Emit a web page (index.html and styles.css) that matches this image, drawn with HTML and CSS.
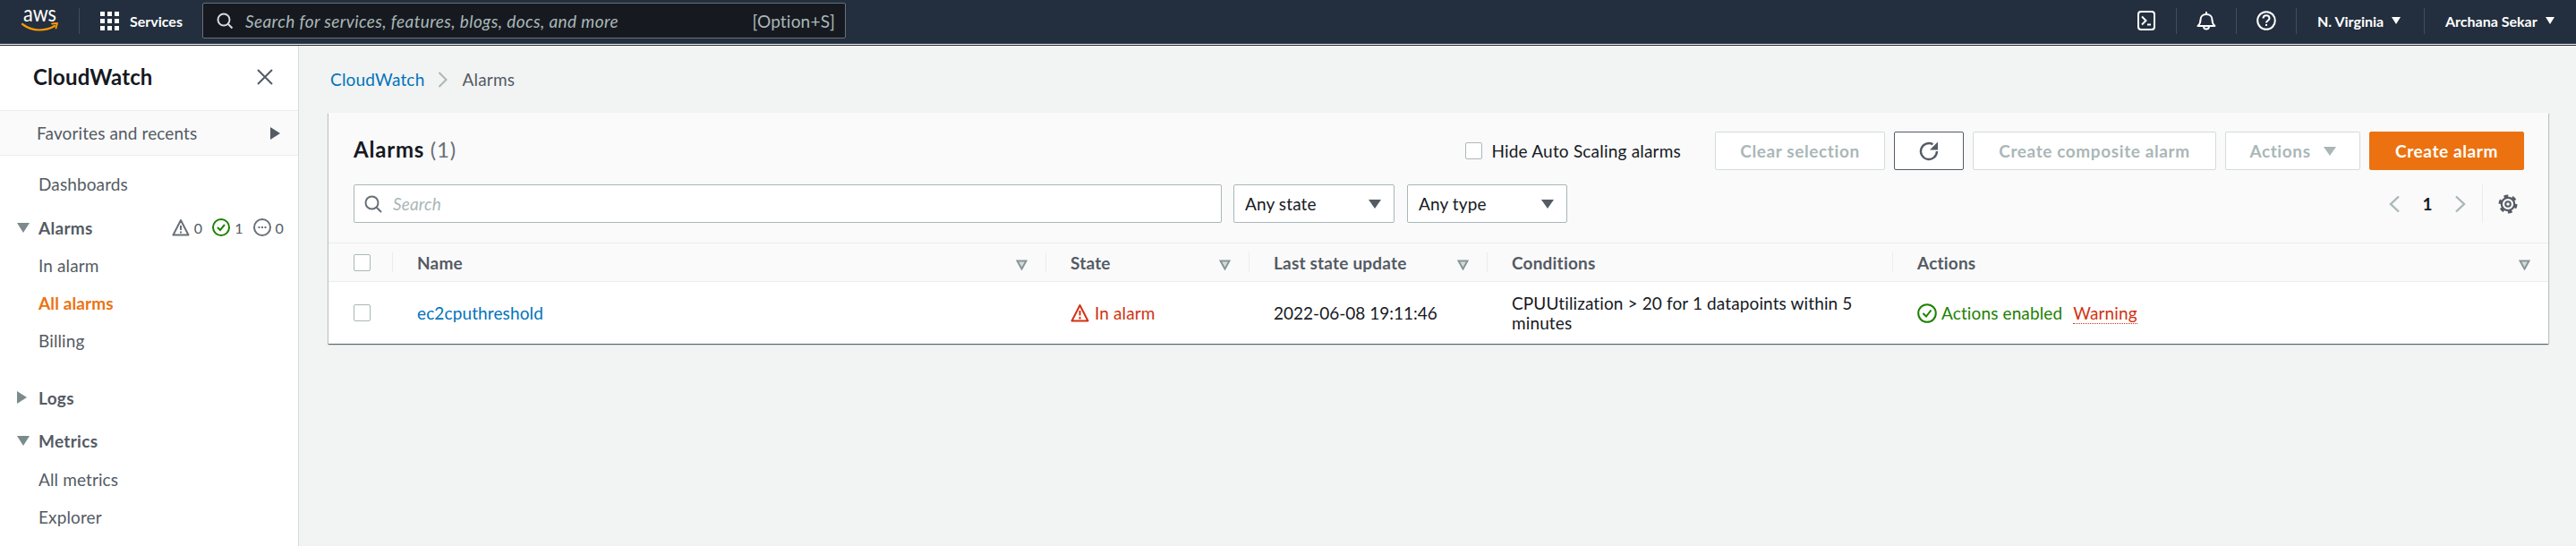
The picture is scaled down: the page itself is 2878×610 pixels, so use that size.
FILE: index.html
```html
<!DOCTYPE html>
<html>
<head>
<title>Alarms | CloudWatch</title>
<link rel="stylesheet" href="styles.css">
</head>
<body>

<header class="topbar">
  <a class="logo">
    <svg class="logo-svg" width="42" height="26" viewBox="0 0 42 26">
      <text x="2" y="14" class="logo-text" textLength="37" lengthAdjust="spacingAndGlyphs">aws</text>
      <path d="M1 17c6 4.500 13 6.500 19 6.500 6 0 12-1.500 17-4.500" fill="none" stroke="#ff9900" stroke-width="2.200" stroke-linecap="round"/>
      <path d="M34 16.500l6-.5-1.500 5.500" fill="none" stroke="#ff9900" stroke-width="1.800" stroke-linecap="round" stroke-linejoin="round"/>
    </svg>
  </a>
  <span class="bar-sep"></span>
  <a class="services">
    <svg width="21" height="21" viewBox="0 0 21 21" fill="#fff">
      <rect width="5" height="5"/><rect x="8" width="5" height="5"/><rect x="16" width="5" height="5"/>
      <rect y="8" width="5" height="5"/><rect x="8" y="8" width="5" height="5"/><rect x="16" y="8" width="5" height="5"/>
      <rect y="16" width="5" height="5"/><rect x="8" y="16" width="5" height="5"/><rect x="16" y="16" width="5" height="5"/>
    </svg>
    <span>Services</span>
  </a>
  <div class="top-search">
    <svg width="19" height="19" viewBox="0 0 19 19" fill="none" stroke="#d5dbdb" stroke-width="2"><circle cx="8" cy="8" r="6.500"/><path d="M12.500 12.500l5 5"/></svg>
    <span class="top-search-text">Search for services, features, blogs, docs, and more</span>
    <span class="top-search-key">[Option+S]</span>
  </div>
  <div class="top-right">
    <a class="top-icon">
      <svg width="20" height="22" viewBox="0 0 20 22" fill="none" stroke="#fff" stroke-width="2"><rect x="1" y="1" width="18" height="20" rx="3"/><path d="M5 6.500l4.500 4.500L5 15.500M11 15.500h4"/></svg>
    </a>
    <span class="bar-sep"></span>
    <a class="top-icon">
      <svg width="22" height="22" viewBox="0 0 22 22" fill="none" stroke="#fff" stroke-width="2"><path d="M1.500 17c2.500-2 3-3.500 3-7 0-3.500 2.500-6 6.500-6s6.500 2.500 6.500 6c0 3.500.5 5 3 7z" stroke-linejoin="round"/><path d="M11 1v3M8 17.500c0 4 6 4 6 0"/></svg>
    </a>
    <span class="bar-sep"></span>
    <a class="top-icon">
      <svg width="22" height="22" viewBox="0 0 22 22" fill="none" stroke="#fff" stroke-width="2"><circle cx="11" cy="11" r="9.800"/><path d="M7.500 8.500c0-4.500 7-4.500 7 0 0 2.500-3.500 2.500-3.500 5"/><path d="M11 15v2"/></svg>
    </a>
    <span class="bar-sep"></span>
    <a class="top-menu region">N. Virginia<i class="caret-white"></i></a>
    <span class="bar-sep"></span>
    <a class="top-menu user">Archana Sekar<i class="caret-white"></i></a>
  </div>
</header>

<div class="layout">

  <nav class="sidebar">
    <div class="side-head">
      <h2>CloudWatch</h2>
      <svg width="18" height="18" viewBox="0 0 18 18" fill="none" stroke="#545b64" stroke-width="2"><path d="M1 1l16 16M17 1L1 17"/></svg>
    </div>
    <div class="favs"><span>Favorites and recents</span><i class="tri-right dark"></i></div>
    <a class="side-link first">Dashboards</a>
    <div class="side-group alarms">
      <i class="tri-down"></i><b>Alarms</b>
      <span class="counts">
        <svg width="20" height="20" viewBox="0 0 20 20" fill="none" stroke="#687078" stroke-width="2"><path d="M10 2L1.500 18.500h17z" stroke-linejoin="round"/><path d="M10 8v5M10 14.500v2"/></svg><em>0</em>
        <svg class="cnt-ok" width="20" height="20" viewBox="0 0 20 20" fill="none" stroke="#1d8102" stroke-width="2"><circle cx="10" cy="10" r="9"/><path d="M6 10l3 3 5-6"/></svg><em>1</em>
        <svg class="cnt-ins" width="20" height="20" viewBox="0 0 20 20" fill="none" stroke="#687078" stroke-width="2"><circle cx="10" cy="10" r="9"/><path d="M5.500 10h2M9 10h2M12.500 10h2"/></svg><em>0</em>
      </span>
    </div>
    <a class="side-link">In alarm</a>
    <a class="side-link active">All alarms</a>
    <a class="side-link">Billing</a>
    <div class="side-group logs"><i class="tri-right"></i><b>Logs</b></div>
    <div class="side-group metrics"><i class="tri-down"></i><b>Metrics</b></div>
    <a class="side-link">All metrics</a>
    <a class="side-link">Explorer</a>
  </nav>

  <main class="content">
    <div class="crumbs">
      <a>CloudWatch</a>
      <svg width="12" height="20" viewBox="0 0 12 20" fill="none" stroke="#aab7b8" stroke-width="2"><path d="M1.500 2l8 8-8 8"/></svg>
      <span>Alarms</span>
    </div>

    <section class="card">
      <div class="card-head">
        <div class="head-row">
          <h1>Alarms <span>(1)</span></h1>
          <label class="hide-as"><i class="check"></i>Hide Auto Scaling alarms</label>
          <button class="btn off clear">Clear selection</button>
          <button class="btn refresh">
            <svg width="24" height="24" viewBox="0 0 24 24" fill="none" stroke="#545b64" stroke-width="2.400"><path d="M16.500 4.200A9 9 0 1 0 21 12"/><path d="M22 1.500v9h-9z" fill="#545b64" stroke="none"/></svg>
          </button>
          <button class="btn off composite">Create composite alarm</button>
          <button class="btn off actions">Actions<i class="caret-grey"></i></button>
          <button class="btn primary">Create alarm</button>
        </div>
        <div class="filter-row">
          <div class="search">
            <svg width="20" height="20" viewBox="0 0 20 20" fill="none" stroke="#687078" stroke-width="2"><circle cx="8.500" cy="8.500" r="7"/><path d="M13.500 13.500l5.500 5.500"/></svg>
            <span>Search</span>
          </div>
          <div class="select state-sel">Any state<i class="caret-dark"></i></div>
          <div class="select type-sel">Any type<i class="caret-dark"></i></div>
          <div class="pager">
            <svg width="12" height="20" viewBox="0 0 12 20" fill="none" stroke="#aab7b8" stroke-width="2.400"><path d="M11 1.500L2 10l9 8.500"/></svg>
            <b>1</b>
            <svg width="12" height="20" viewBox="0 0 12 20" fill="none" stroke="#aab7b8" stroke-width="2.400"><path d="M1 1.500L10 10l-9 8.500"/></svg>
            <span class="pager-sep"></span>
            <svg class="gear" width="22" height="22" viewBox="0 0 22 22" fill="none" stroke="#545b64"><circle cx="11" cy="11" r="7.200" stroke-width="2.200"/><circle cx="11" cy="11" r="9" stroke-width="3" stroke-dasharray="4.700 4.720"/><circle cx="11" cy="11" r="2.800" stroke-width="2"/></svg>
          </div>
        </div>
      </div>

      <div class="grid-row grid-head">
        <div class="cell c-check"><i class="check"></i></div>
        <div class="cell c-name"><b>Name</b><svg class="sort" width="13" height="12" viewBox="0 0 13 12"><path d="M1.500 1.500h10L6.500 10.500z"/></svg></div>
        <div class="cell c-state"><b>State</b><svg class="sort" width="13" height="12" viewBox="0 0 13 12"><path d="M1.500 1.500h10L6.500 10.500z"/></svg></div>
        <div class="cell c-time"><b>Last state update</b><svg class="sort" width="13" height="12" viewBox="0 0 13 12"><path d="M1.500 1.500h10L6.500 10.500z"/></svg></div>
        <div class="cell c-cond"><b>Conditions</b></div>
        <div class="cell c-act"><b>Actions</b><svg class="sort" width="13" height="12" viewBox="0 0 13 12"><path d="M1.500 1.500h10L6.500 10.500z"/></svg></div>
      </div>
      <div class="grid-row grid-body">
        <div class="cell c-check"><i class="check"></i></div>
        <div class="cell c-name"><a>ec2cputhreshold</a></div>
        <div class="cell c-state red">
          <svg width="21" height="21" viewBox="0 0 21 21" fill="none" stroke="#d13212" stroke-width="2"><path d="M10.500 2L1.500 19.500h18z" stroke-linejoin="round"/><path d="M10.500 8v5.500M10.500 15v2.500"/></svg>
          <span>In alarm</span>
        </div>
        <div class="cell c-time"><span class="stamp">2022-06-08 19:11:46</span></div>
        <div class="cell c-cond"><span class="cond-text">CPUUtilization &gt; 20 for 1 datapoints within 5 minutes</span></div>
        <div class="cell c-act">
          <svg width="22" height="22" viewBox="0 0 22 22" fill="none" stroke="#1d8102" stroke-width="2"><circle cx="11" cy="11" r="9.800"/><path d="M6.500 11l3.500 3.500 5.500-7"/></svg>
          <span class="green">Actions enabled</span>
          <span class="warn">Warning</span>
        </div>
      </div>
    </section>
  </main>
</div>

</body>
</html>
```

FILE: styles.css
```css
* {box-sizing: border-box;}
html, body {margin: 0; padding: 0;}
body {width: 2878px; height: 610px; overflow: hidden; background: #f2f3f3; color: #16191f; font-family: "Lato", "Liberation Sans", sans-serif; font-size: 19px; letter-spacing: .12px;}
i, em {font-style: normal; display: inline-block;}
a {text-decoration: none;}

/* top bar */
.topbar {height: 51px; background: #232f3e; border-bottom: 1px solid #16191f; box-shadow: inset 0 -1px 0 #fff; padding: 0 0 4px 24px; display: flex; align-items: center; color: #fff; letter-spacing: 0;}
.logo {width: 42px; height: 26px; margin-right: 22px;}
.logo-svg {overflow: visible;}
.logo-text {font: 400 25px "Lato", sans-serif; fill: #fff;}
.bar-sep {width: 1px; height: 29px; background: #414d5c;}
.services {display: flex; align-items: center; gap: 12px; margin-left: 23px; font-size: 16px; font-weight: 700; width: 114px;}
.top-search {width: 719px; height: 40px; background: #161a20; border: 1px solid #687078; border-radius: 2px; padding: 0 11px 0 15px; display: flex; align-items: center; color: #aab7b8; font-size: 19px;}
.top-search-text {font-style: italic; margin-left: 13px; flex: 1; letter-spacing: .4px;}
.top-search-key {letter-spacing: .2px;}
.top-right {margin-left: auto; display: flex; align-items: center;}
.top-icon {width: 66px; display: flex; justify-content: center;}
.top-menu {font-size: 16px; font-weight: 700; display: flex; align-items: center; white-space: nowrap;}
.region {width: 142px; padding-left: 23px;}
.user {width: 169px; padding-left: 23px;}
.caret-white {width: 0; height: 0; border: 5.500px solid transparent; border-top: 8px solid #fff; border-bottom: 0; margin-left: 9px;}

.layout {display: flex; height: 559px;}

/* left nav */
.sidebar {width: 334px; background: #fff; border-right: 1px solid #d5dbdb; flex: none; color: #545b64;}
.side-head {height: 72px; padding: 0 28px 3px 37px; display: flex; align-items: center; justify-content: space-between;}
.side-head h2 {margin: 0; font-size: 24px; font-weight: 700; color: #16191f;}
.favs {height: 51px; background: #fafafa; border-top: 1px solid #eaeded; border-bottom: 1px solid #eaeded; padding: 0 20px 0 41px; display: flex; align-items: center; justify-content: space-between;}
.side-link {display: block; height: 42px; line-height: 42px; padding-left: 43px; color: #545b64;}
.side-link.first {margin-top: 11px; margin-bottom: 6px;}
.side-link.active {color: #ec7211; font-weight: 700;}
.side-group {display: flex; align-items: center; height: 42px; padding-left: 19px; color: #545b64;}
.side-group b {margin-left: 10px; letter-spacing: .3px;}
.side-group.alarms {margin-bottom: 1px;}
.side-group.logs {margin-top: 21px; margin-bottom: 6px;}
.side-group.metrics {margin-bottom: 2px;}
.tri-down {width: 0; height: 0; border: 7px solid transparent; border-top: 11px solid #7b8b8c; border-bottom: 0;}
.tri-right {width: 0; height: 0; border: 7px solid transparent; border-left: 11px solid #7b8b8c; border-right: 0; margin-right: 3px;}
.tri-right.dark {border-left-color: #545b64; margin-right: 0;}
.counts {margin-left: auto; padding-right: 16px; display: flex; align-items: center; font-size: 16px;}
.counts em {margin-left: 5px; color: #545b64;}
.counts .cnt-ok, .counts .cnt-ins {margin-left: 11px;}

/* main */
.content {flex: 1; padding: 0 31px 0 33px;}
.crumbs {height: 75px; display: flex; align-items: center; gap: 15px; padding: 0 0 0 2px; color: #545b64; letter-spacing: .2px;}
.crumbs a {color: #0073bb;}

.card {background: #fff; box-shadow: 0 1px 1px 0 rgba(0,28,36,.5), 1px 1px 1px 0 rgba(0,28,36,.15), -1px 1px 1px 0 rgba(0,28,36,.15);}
.card-head {height: 146px; background: #fafafa; border-bottom: 1px solid #eaeded; padding: 21px 27px 0 28px;}
.head-row {display: flex; align-items: center; height: 43px;}
.head-row h1 {margin: 0 0 5px; font-size: 24px; font-weight: 700; flex: 1; letter-spacing: .8px;}
.head-row h1 span {font-weight: 400; color: #687078;}
.hide-as {display: flex; align-items: center; margin-right: 28px; letter-spacing: .2px;}
.hide-as .check {margin-right: 10px;}
.check {width: 19px; height: 19px; background: #fff; border: 1px solid #aab7b8; border-radius: 2px;}
.btn {height: 43px; font: 700 19px "Lato", sans-serif; letter-spacing: .6px; border: 1px solid #d5dbdb; border-radius: 2px; background: #fff; margin-left: 10px; padding: 0; display: flex; align-items: center; justify-content: center;}
.btn.off {color: #aab7b8;}
.clear {width: 190px;}
.refresh {width: 78px; border-color: #545b64;}
.composite {width: 272px;}
.actions {width: 151px;}
.primary {width: 173px; background: #ec7211; border-color: #ec7211; color: #fff;}
.caret-grey {width: 0; height: 0; border: 7px solid transparent; border-top: 10px solid #aab7b8; border-bottom: 0; margin-left: 14px;}
.filter-row {display: flex; align-items: center; margin-top: 16px; height: 43px;}
.search {width: 970px; height: 43px; background: #fff; border: 1px solid #aab7b8; border-radius: 2px; padding: 0 0 0 11px; display: flex; align-items: center; gap: 12px; color: #aab7b8; font-style: italic;}
.select {height: 43px; background: #fff; border: 1px solid #aab7b8; border-radius: 2px; padding: 0 14px 0 12px; display: flex; align-items: center; justify-content: space-between;}
.state-sel {width: 180px; margin-left: 13px;}
.type-sel {width: 179px; margin-left: 14px;}
.caret-dark {width: 0; height: 0; border: 7px solid transparent; border-top: 10px solid #545b64; border-bottom: 0;}
.pager {margin-left: auto; display: flex; align-items: center; height: 43px;}
.pager b {width: 62px; text-align: center;}
.pager-sep {width: 1px; height: 43px; background: #eaeded; margin: 0 17px 0 18px;}
.gear {margin-right: 7px;}

/* alarms table */
.grid-row {display: flex;}
.grid-head {height: 43px; background: #fafafa; border-bottom: 1px solid #eaeded; color: #545b64; letter-spacing: .2px;}
.grid-body {height: 69px; background: #fff;}
.cell {display: flex; align-items: center; position: relative; padding-left: 28px;}
.grid-head .cell + .cell::before {content: ""; position: absolute; left: 0; top: 10px; height: 22px; width: 1px; background: #eaeded;}
.sort {margin: 5px 20px 0 auto; fill: #d5dbdb; stroke: #879596; stroke-width: 2;}
.c-check {width: 71px;}
.c-name {width: 730px;}
.c-name a {color: #0073bb;}
.c-state {width: 227px;}
.c-time {width: 266px;}
.c-cond {width: 453px; padding-right: 28px;}
.c-act {flex: 1;}
.stamp {letter-spacing: 0;}
.red {color: #d13212; gap: 6px;}
.green {color: #1d8102; margin-left: 5px;}
.warn {color: #d13212; margin-left: 12px; border-bottom: 1px dotted #d13212;}
.cond-text {line-height: 22px;}
```
